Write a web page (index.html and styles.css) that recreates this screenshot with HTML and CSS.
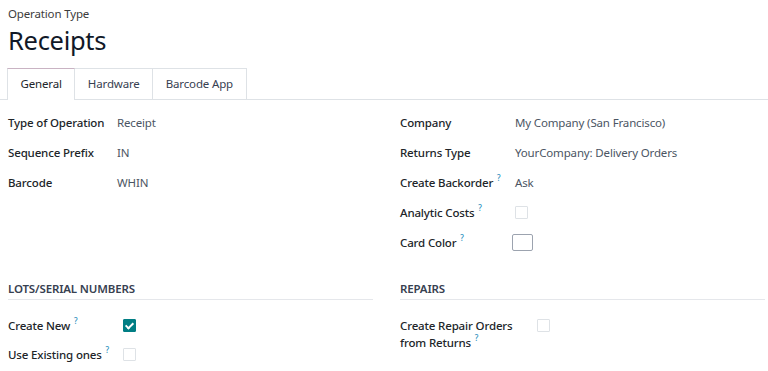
FILE: index.html
```html
<!DOCTYPE html>
<html lang="en">
<head>
    <meta charset="UTF-8">
    <title>Receipts</title>
    <link rel="stylesheet" href="styles.css">
</head>
<body>
    <div class="sheet">
        <!-- Título -->
        <div class="title">
            <div class="subtitle">Operation Type</div>
            <h1>Receipts</h1>
        </div>

        <!-- Abas -->
        <ul class="tabs">
            <li class="tab active">General</li>
            <li class="tab">Hardware</li>
            <li class="tab">Barcode App</li>
        </ul>

        <!-- Grupo principal -->
        <div class="groups">
            <div class="group left">
                <div class="row"><span class="label">Type of Operation</span><span class="value">Receipt</span></div>
                <div class="row"><span class="label">Sequence Prefix</span><span class="value">IN</span></div>
                <div class="row"><span class="label">Barcode</span><span class="value">WHIN</span></div>
            </div>
            <div class="group right">
                <div class="row"><span class="label">Company</span><span class="value">My Company (San Francisco)</span></div>
                <div class="row"><span class="label">Returns Type</span><span class="value">YourCompany: Delivery Orders</span></div>
                <div class="row"><span class="label">Create Backorder <sup>?</sup></span><span class="value">Ask</span></div>
                <div class="row"><span class="label">Analytic Costs <sup>?</sup></span><span class="value"><span class="check"></span></span></div>
                <div class="row"><span class="label">Card Color <sup>?</sup></span><span class="value"><span class="color"></span></span></div>
            </div>
        </div>

        <!-- Seções -->
        <div class="groups sections">
            <div class="group left">
                <div class="section-title">LOTS/SERIAL NUMBERS</div>
                <div class="row"><span class="label">Create New <sup>?</sup></span><span class="value"><span class="check checked"></span></span></div>
                <div class="row short"><span class="label">Use Existing ones <sup>?</sup></span><span class="value"><span class="check"></span></span></div>
            </div>
            <div class="group right">
                <div class="section-title">REPAIRS</div>
                <div class="row multi"><span class="label">Create Repair Orders from Returns <sup>?</sup></span><span class="value"><span class="check"></span></span></div>
            </div>
        </div>
    </div>
</body>
</html>
```

FILE: styles.css
```css
/* Estilo geral */
body {
    margin: 0;
    font-family: "Noto Sans", "Open Sans", sans-serif;
    font-size: 11.5px;
    letter-spacing: -0.15px;
    color: #212529;
    background-color: #ffffff;
}

.sheet {
    padding: 0 3px 0 8px;
}

/* Título */
.title {
    padding-top: 6px;
}

.subtitle {
    font-size: 11.5px;
    line-height: 16px;
    color: #3c3c3c;
}

h1 {
    margin: 0;
    font-size: 25.5px;
    font-weight: 400;
    letter-spacing: -0.3px;
    line-height: 36px;
    color: #111827;
}

/* Abas */
.tabs {
    list-style: none;
    display: flex;
    margin: 10px -3px 0 -8px;
    padding: 0 0 0 7px;
    border-bottom: 1px solid #dee2e6;
}

.tab {
    height: 30px;
    line-height: 30px;
    padding: 0 12.5px;
    color: #374151;
    border: 1px solid #dee2e6;
    border-bottom: none;
    margin-bottom: -1px;
    background-color: #ffffff;
}

.tab + .tab {
    border-left: none;
}

.tab.active {
    border-top-color: #c9b3c3;
    height: 31px;
    color: #212529;
}

/* Grupos */
.groups {
    display: grid;
    grid-template-columns: 1fr 1fr;
    column-gap: 27px;
    padding-top: 7px;
}

.row {
    display: flex;
    align-items: center;
    min-height: 30px;
}

.label {
    font-weight: 500;
    flex: none;
    white-space: nowrap;
}

.left .label {
    width: 109px;
}

.right .label {
    width: 115px;
}

.value {
    color: #4b5563;
}

sup {
    color: #2a8fbd;
    font-size: 8px;
    font-weight: 500;
    line-height: 0;
    vertical-align: 6px;
    margin-left: 1px;
}

/* Caixas de seleção */
.check {
    display: block;
    width: 11px;
    height: 11px;
    border: 1px solid #dee2e6;
    border-radius: 1px;
}

.left .check {
    margin-left: 6px;
}

.check.checked {
    background-color: #017e84;
    border-color: #017e84;
    position: relative;
}

.check.checked::after {
    content: "";
    position: absolute;
    left: 3px;
    top: 1px;
    width: 3px;
    height: 6px;
    border: solid #ffffff;
    border-width: 0 2px 2px 0;
    transform: rotate(45deg);
}

.color {
    display: block;
    width: 19px;
    height: 15px;
    margin-left: -3px;
    border: 1px solid #9ca3af;
    border-radius: 2px;
}

/* Seções */
.sections {
    padding-top: 24px;
}

.section-title {
    font-weight: 600;
    color: #374151;
    padding-bottom: 3px;
    border-bottom: 1px solid #e5e7eb;
    margin-bottom: 10px;
}

.row.short {
    min-height: 29px;
}

.row.multi {
    align-items: flex-start;
    padding-top: 7px;
    line-height: 17px;
}

.row.multi .label {
    width: 137px;
    white-space: normal;
}

.row.multi .check {
    margin-top: 2px;
}
```
